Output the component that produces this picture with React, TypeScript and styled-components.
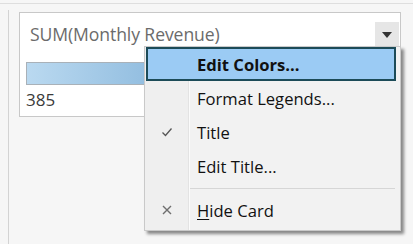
import React from "react";
import styled, { createGlobalStyle } from "styled-components";

const GlobalStyle = createGlobalStyle`
  html, body {
    margin: 0;
    padding: 0;
    background: #f6f6f6;
  }
  body {
    font-family: "Open Sans", "Noto Sans", "Liberation Sans", sans-serif;
  }
`;

const Page = styled.div`
  position: relative;
  width: 413px;
  height: 244px;
  overflow: hidden;
  box-sizing: border-box;
  padding-top: 3px;
  background: #f6f6f6;
`;

const TopRule = styled.div`
  border-top: 1px solid #dedede;
`;

const Pane = styled.div`
  margin: 6px 0 0 8px;
  height: 234px;
  box-sizing: border-box;
  border-left: 1px solid #d3d3d3;
  padding: 2px 0 0 10px;
`;

const Card = styled.div`
  width: 382px;
  height: 105px;
  box-sizing: border-box;
  background: #ffffff;
  border: 1px solid #c8c8c8;
  display: flex;
  flex-direction: column;
`;

const CardHeader = styled.div`
  display: flex;
  align-items: center;
  justify-content: space-between;
  padding: 9px 1px 0 10px;
`;

const CardTitle = styled.span`
  font-size: 17.6px;
  color: #6b6b6b;
  line-height: 24px;
  white-space: nowrap;
  letter-spacing: -0.1px;
`;

const DropButton = styled.div`
  width: 24px;
  height: 24px;
  background: #e6e6e6;
  display: flex;
  align-items: center;
  justify-content: center;
`;

const Triangle = styled.div`
  width: 0;
  height: 0;
  margin-top: 1px;
  border-left: 5px solid transparent;
  border-right: 5px solid transparent;
  border-top: 6px solid #333333;
`;

const LegendBody = styled.div`
  padding: 16px 0 0 6px;
  display: flex;
  flex-direction: column;
`;

const ColorBar = styled.div`
  width: 200px;
  height: 23px;
  box-sizing: border-box;
  border: 1px solid #a9b1b8;
  background: linear-gradient(to right, #bad9f0 0%, #7aadd6 100%);
`;

const LegendValue = styled.span`
  font-size: 17px;
  color: #3a3a3a;
  line-height: 22px;
  margin-top: 4px;
`;

const Menu = styled.div`
  position: absolute;
  left: 144px;
  top: 46px;
  width: 257px;
  height: 185px;
  box-sizing: border-box;
  border: 1px solid #c9c9c9;
  padding: 0 4px 0 1px;
  background: linear-gradient(
    to right,
    #efefef 0 43px,
    #e3e3e3 43px 44px,
    #fbfbfb 44px 45px,
    #f2f2f2 45px
  );
  box-shadow: 3px 3px 3px rgba(0, 0, 0, 0.45);
  display: flex;
  flex-direction: column;
`;

const Item = styled.div<{ $active?: boolean }>`
  height: 34px;
  box-sizing: border-box;
  display: flex;
  align-items: center;
  border: 2px solid ${(p) => (p.$active ? "#1c4b58" : "transparent")};
  background: ${(p) => (p.$active ? "#9bcbf4" : "transparent")};
  font-size: 16.6px;
  font-weight: ${(p) => (p.$active ? 700 : 400)};
  color: #111111;
`;

const IconBox = styled.span`
  width: 38px;
  display: flex;
  align-items: center;
  justify-content: center;
  color: #666666;
`;

const Label = styled.span`
  padding-left: 11px;
  white-space: nowrap;
`;

const AccessKey = styled.span`
  text-decoration: underline;
  text-underline-offset: 2px;
`;

const Separator = styled.div`
  height: 10px;
  margin: 0 1px 0 44px;
  display: flex;
  align-items: center;
  &::after {
    content: "";
    flex: 1;
    border-top: 1px solid #d6d6d6;
  }
`;

const CheckIcon = () => (
  <svg width="14" height="14" viewBox="0 0 14 14" fill="none">
    <path d="M2.5 7.5 L5.5 10.5 L11.5 3.5" stroke="#555" strokeWidth="1.3" />
  </svg>
);

const CrossIcon = () => (
  <svg width="14" height="14" viewBox="0 0 14 14" fill="none">
    <path d="M3 3 L11 11 M11 3 L3 11" stroke="#6e6e6e" strokeWidth="1.4" />
  </svg>
);

export default function App() {
  return (
    <>
      <GlobalStyle />
      <Page>
        <TopRule />
        <Pane>
          <Card>
            <CardHeader>
              <CardTitle>SUM(Monthly Revenue)</CardTitle>
              <DropButton>
                <Triangle />
              </DropButton>
            </CardHeader>
            <LegendBody>
              <ColorBar />
              <LegendValue>385</LegendValue>
            </LegendBody>
          </Card>
        </Pane>
        <Menu>
          <Item $active>
            <IconBox />
            <Label>Edit Colors...</Label>
          </Item>
          <Item>
            <IconBox />
            <Label>Format Legends...</Label>
          </Item>
          <Item>
            <IconBox>
              <CheckIcon />
            </IconBox>
            <Label>Title</Label>
          </Item>
          <Item>
            <IconBox />
            <Label>Edit Title...</Label>
          </Item>
          <Separator />
          <Item>
            <IconBox>
              <CrossIcon />
            </IconBox>
            <Label>
              <AccessKey>H</AccessKey>ide Card
            </Label>
          </Item>
        </Menu>
      </Page>
    </>
  );
}
